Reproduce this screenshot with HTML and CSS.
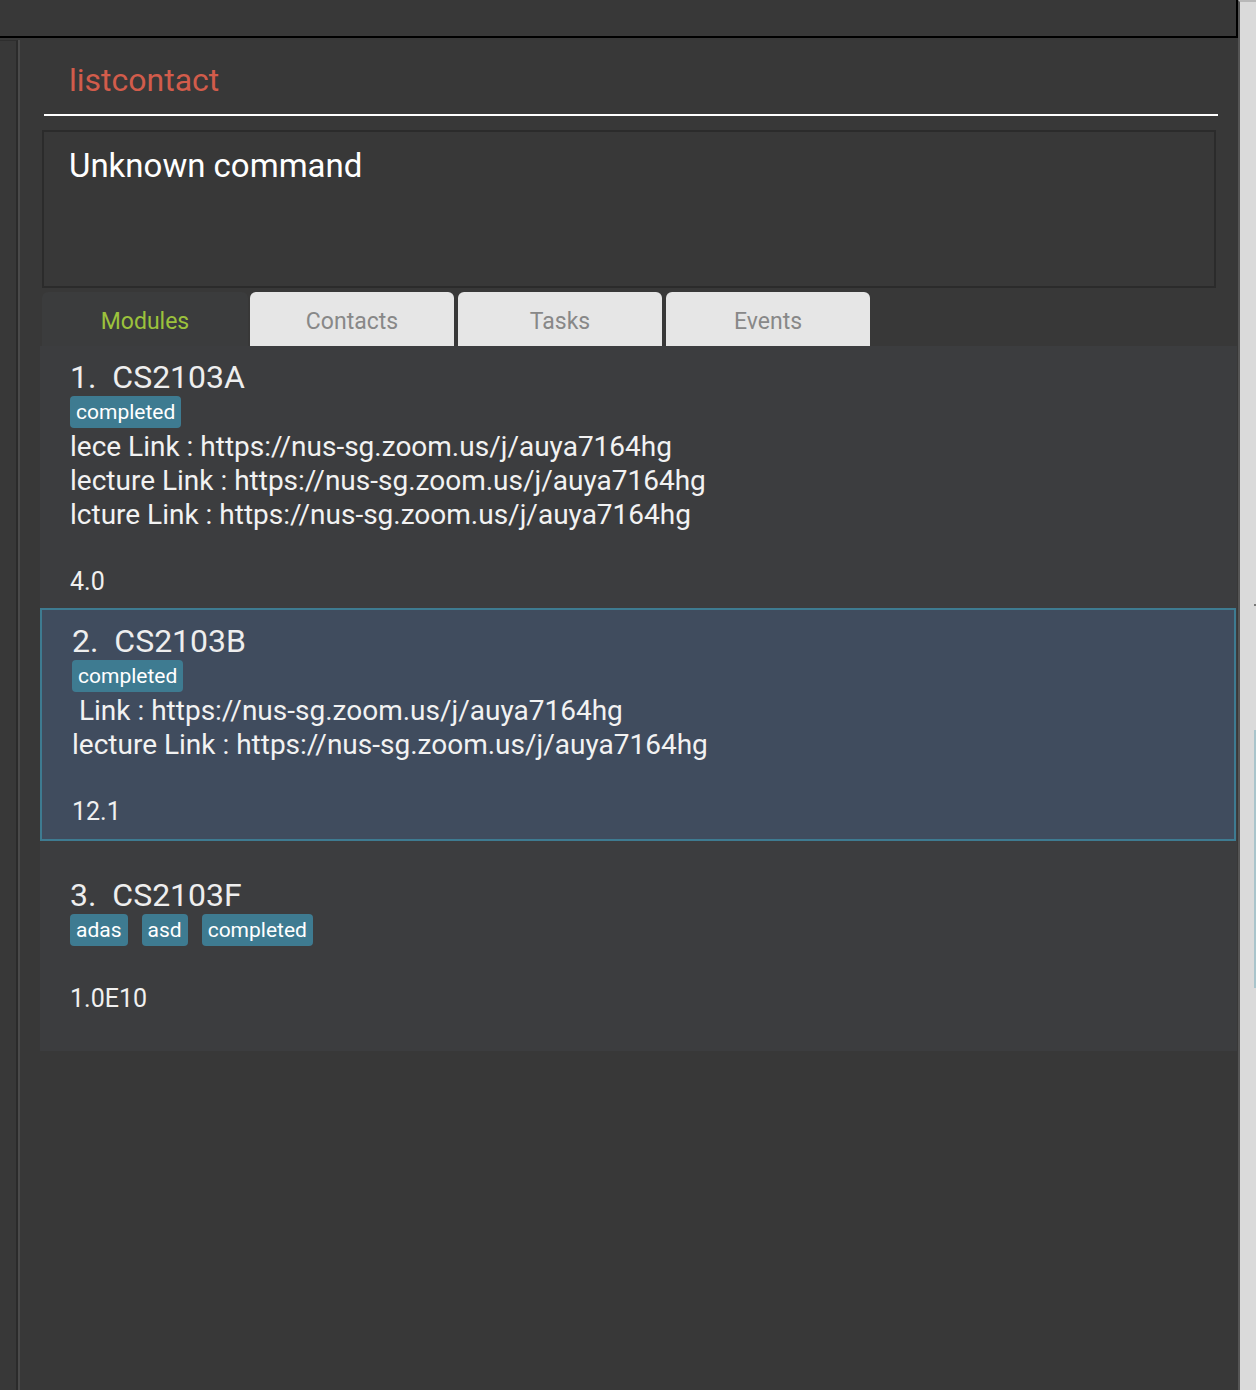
FILE: index.html
```html
<!DOCTYPE html>
<html>
<head>
<meta charset="utf-8">
<link rel="stylesheet" href="styles.css">
</head>
<body>
<div class="window">
  <div class="main">
    <div class="topbar"></div>
    <div class="body">
      <div class="sidebar"></div>
      <div class="content">
        <div class="command">listcontact</div>
        <div class="result">Unknown command</div>
        <div class="tabs">
          <div class="tab tab-active">Modules</div>
          <div class="tab tab-first">Contacts</div>
          <div class="tab">Tasks</div>
          <div class="tab">Events</div>
        </div>
        <div class="panel">
          <div class="card">
            <div class="title">1.  CS2103A</div>
            <div class="tags"><span class="tag">completed</span></div>
            <div class="links">
              <div class="link">lece Link : https://nus-sg.zoom.us/j/auya7164hg</div>
              <div class="link">lecture Link : https://nus-sg.zoom.us/j/auya7164hg</div>
              <div class="link">lcture Link : https://nus-sg.zoom.us/j/auya7164hg</div>
            </div>
            <div class="value">4.0</div>
          </div>
          <div class="card card-selected">
            <div class="title">2.  CS2103B</div>
            <div class="tags"><span class="tag">completed</span></div>
            <div class="links">
              <div class="link"> Link : https://nus-sg.zoom.us/j/auya7164hg</div>
              <div class="link">lecture Link : https://nus-sg.zoom.us/j/auya7164hg</div>
            </div>
            <div class="value">12.1</div>
          </div>
          <div class="card card-short">
            <div class="title">3.  CS2103F</div>
            <div class="tags"><span class="tag">adas</span><span class="tag">asd</span><span class="tag">completed</span></div>
            <div class="value">1.0E10</div>
          </div>
        </div>
      </div>
    </div>
  </div>
  <div class="strip">
    <div class="strip-tick"></div>
    <div class="strip-thumb"></div>
  </div>
</div>
</body>
</html>
```

FILE: styles.css
```css
html, body {
  margin: 0;
  padding: 0;
}
body {
  width: 1256px;
  height: 1390px;
  overflow: hidden;
  background: #383838;
  font-family: Roboto, "Liberation Sans", sans-serif;
  color: #f2f2f2;
}
.window {
  display: flex;
  height: 1390px;
}
.main {
  width: 1238px;
  display: flex;
  flex-direction: column;
  background: #383838;
}
.topbar {
  height: 36px;
  border-bottom: 2px solid #000;
  border-right: 2px solid #000;
  box-sizing: content-box;
  width: 1236px;
}
.body {
  flex: 1;
  display: flex;
}
.sidebar {
  width: 16px;
  margin-top: 2px;
  border-top: 1px solid #2e2e2e;
  border-right: 2px solid #2b2b2b;
  box-shadow: 2px 0 0 #4a4a4a;
  flex: none;
}
.content {
  flex: 1;
  padding-left: 2px;
  display: flex;
  flex-direction: column;
}
.command {
  margin: 0 20px 0 24px;
  padding: 22px 0 14px 25px;
  font-size: 32px;
  line-height: 40px;
  color: #d25c4b;
  border-bottom: 2px solid #ffffff;
}
.result {
  margin: 14px 22px 0 22px;
  border: 2px solid #2b2b2b;
  padding: 14px 0 0 25px;
  box-sizing: border-box;
  height: 158px;
  font-size: 33px;
  line-height: 40px;
  color: #ffffff;
}
.tabs {
  display: flex;
  margin: 4px 0 0 22px;
  height: 54px;
}
.tab {
  width: 204px;
  margin-right: 4px;
  background: #e6e6e6;
  border-radius: 6px 6px 0 0;
  color: #888888;
  font-size: 23px;
  padding-top: 4px;
  box-sizing: border-box;
  display: flex;
  align-items: center;
  justify-content: center;
}
.tab-active {
  width: 206px;
  margin-right: 2px;
  background: #3b3c3d;
  color: #9cc23c;
}
.panel {
  margin-left: 20px;
  margin-right: 1px;
  background: #3c3d3f;
}
.card {
  padding: 12px 0 9px 30px;
}
.card-selected {
  background: #404c5e;
  border: 2px solid #3e7b91;
  margin-right: 1px;
  padding-bottom: 10px;
}
.card-short {
  padding-top: 35px;
  padding-bottom: 35px;
}
.title {
  font-size: 32px;
  line-height: 38px;
  white-space: pre;
  color: #eeeeee;
}
.tags {
  display: flex;
  gap: 14px;
  height: 32px;
}
.tag {
  background: #3e7b91;
  border-radius: 4px;
  color: #ffffff;
  font-size: 21px;
  line-height: 32px;
  padding: 0 6px;
}
.links {
  margin-top: 2px;
}
.link {
  font-size: 28px;
  line-height: 34px;
  white-space: pre;
  color: #f2f2f2;
}
.value {
  margin-top: 33px;
  font-size: 25px;
  line-height: 34px;
  color: #f0f0f0;
}
.card-short .value {
  margin-top: 36px;
}
.strip {
  width: 18px;
  position: relative;
  background: #dadada;
  border-left: 2px solid #555555;
  box-sizing: border-box;
  border-top: 2px solid #b8b8b8;
}
.strip-tick {
  position: absolute;
  left: 14px;
  top: 602px;
  width: 2px;
  height: 2px;
  background: #777;
}
.strip-thumb {
  position: absolute;
  right: 0;
  top: 728px;
  width: 2px;
  height: 258px;
  background: #a9c4cb;
}
```
